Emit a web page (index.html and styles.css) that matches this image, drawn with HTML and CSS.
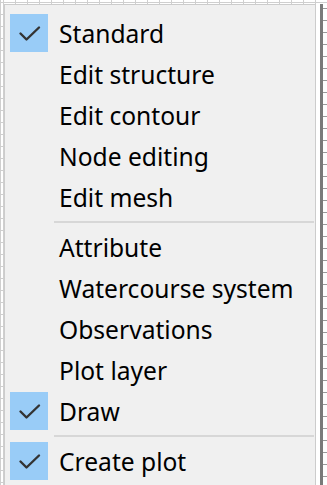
FILE: index.html
```html
<!DOCTYPE html>
<html>
<head>
<meta charset="utf-8">
<link rel="stylesheet" href="styles.css">
</head>
<body>
<div class="stage">
  <div class="menu">
    <div class="item checked"><span class="box"><svg viewBox="0 0 38 38" width="38" height="38"><path d="M10.5 19.5 L16.5 25.5 L29 13.5" fill="none" stroke="#333" stroke-width="2.4" stroke-linecap="round" stroke-linejoin="round"/></svg></span><span class="label">Standard</span></div>
    <div class="item"><span class="box"></span><span class="label">Edit structure</span></div>
    <div class="item"><span class="box"></span><span class="label">Edit contour</span></div>
    <div class="item"><span class="box"></span><span class="label">Node editing</span></div>
    <div class="item"><span class="box"></span><span class="label">Edit mesh</span></div>
    <div class="sep"></div>
    <div class="item"><span class="box"></span><span class="label">Attribute</span></div>
    <div class="item"><span class="box"></span><span class="label">Watercourse system</span></div>
    <div class="item"><span class="box"></span><span class="label">Observations</span></div>
    <div class="item"><span class="box"></span><span class="label">Plot layer</span></div>
    <div class="item checked"><span class="box"><svg viewBox="0 0 38 38" width="38" height="38"><path d="M10.5 19.5 L16.5 25.5 L29 13.5" fill="none" stroke="#333" stroke-width="2.4" stroke-linecap="round" stroke-linejoin="round"/></svg></span><span class="label">Draw</span></div>
    <div class="sep"></div>
    <div class="item checked"><span class="box"><svg viewBox="0 0 38 38" width="38" height="38"><path d="M10.5 19.5 L16.5 25.5 L29 13.5" fill="none" stroke="#333" stroke-width="2.4" stroke-linecap="round" stroke-linejoin="round"/></svg></span><span class="label">Create plot</span></div>
  </div>
  <div class="gap"></div>
  <div class="ruler"></div>
</div>
</body>
</html>
```
FILE: styles.css
```css
html, body {
  margin: 0;
  padding: 0;
}
body {
  width: 327px;
  height: 485px;
  overflow: hidden;
  background-color: #ffffff;
  background-image:
    repeating-linear-gradient(to right, #cfcfcf 0, #cfcfcf 1px, transparent 1px, transparent 12px),
    repeating-linear-gradient(to bottom, #cfcfcf 0, #cfcfcf 1px, transparent 1px, transparent 12px);
  background-position: 3px 2px, 0 2px;
  font-family: "Noto Sans", "Open Sans", sans-serif;
}
.stage {
  display: flex;
  align-items: flex-start;
  padding: 4px 0 0 4px;
}
.menu {
  width: 312px;
  height: 500px;
  flex: none;
  background: #f0f0f0;
  border: 1px solid #cccccc;
  padding-top: 7px;
  box-sizing: border-box;
}
.item {
  display: flex;
  align-items: center;
  height: 41px;
}
.box {
  width: 38px;
  height: 38px;
  margin-left: 5px;
  flex: none;
  display: flex;
}
.checked .box {
  background: #99ccf7;
}
.label {
  margin-left: 11px;
  padding-top: 3px;
  font-size: 24.6px;
  color: #000;
  white-space: nowrap;
  line-height: 1;
}
.sep {
  height: 9px;
  display: flex;
  align-items: center;
  padding-left: 49px;
  padding-right: 1px;
}
.sep::before {
  content: "";
  flex: 1;
  height: 2px;
  background: #d7d7d7;
}
.gap {
  width: 4px;
  height: 485px;
  background: #fff;
  flex: none;
}
.ruler {
  width: 7px;
  height: 485px;
  flex: none;
  background-image:
    linear-gradient(to right, #7a7a7a 0, #7a7a7a 3px, transparent 3px),
    repeating-linear-gradient(to bottom, #9a9a9a 0, #9a9a9a 1px, #ffffff 1px, #ffffff 12px);
  background-position: 0 0, 0 4px;
}
```
